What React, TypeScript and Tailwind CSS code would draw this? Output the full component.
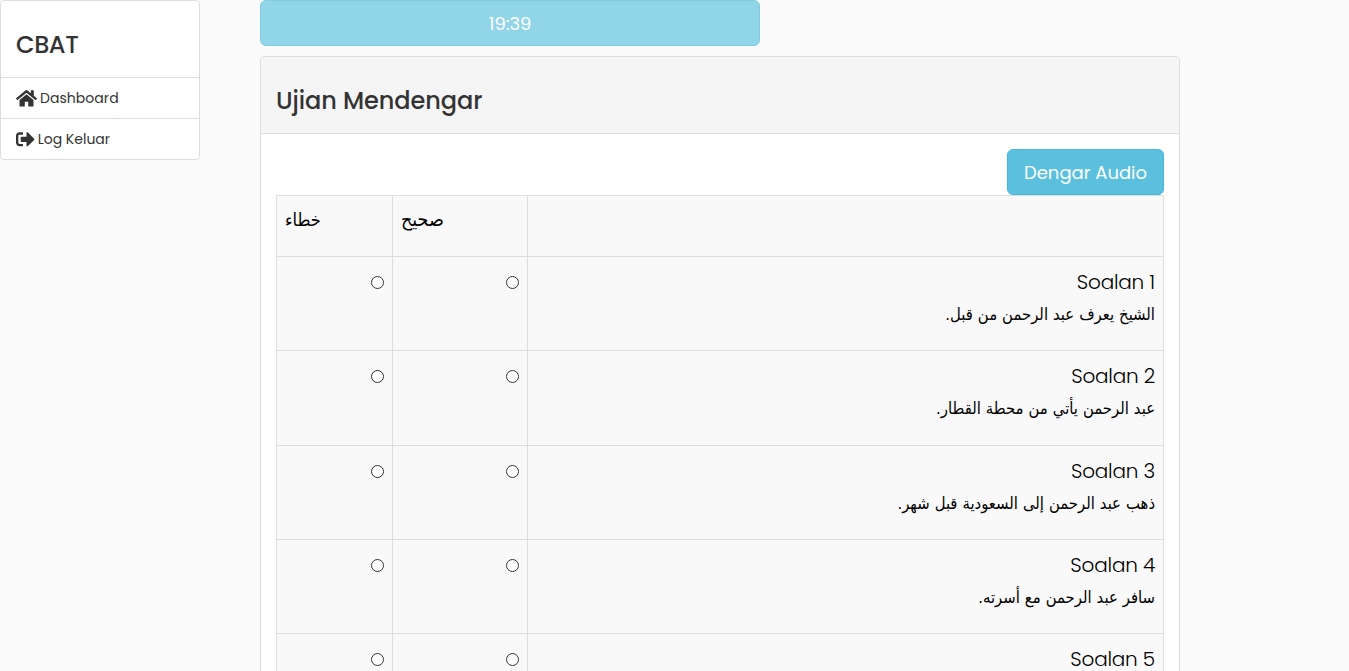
import { FaHome, FaSignOutAlt } from "react-icons/fa";

const questions = [
  { id: 1, text: "الشيخ يعرف عبد الرحمن من قبل." },
  { id: 2, text: "عبد الرحمن يأتي من محطة القطار." },
  { id: 3, text: "ذهب عبد الرحمن إلى السعودية قبل شهر." },
  { id: 4, text: "سافر عبد الرحمن مع أسرته." },
  { id: 5, text: "" },
];

function Choice({ name, label }: { name: string; label: string }) {
  return (
    <div className="flex justify-end border-l border-[#ddd] pt-[19px] pr-2">
      <input
        type="radio"
        name={name}
        aria-label={label}
        className="size-[13px] appearance-none rounded-full border border-[#333] bg-white checked:border-4"
      />
    </div>
  );
}

export default function App() {
  return (
    <div className="flex h-screen items-start overflow-hidden bg-[#fafafa] font-['Poppins','Inter',sans-serif] text-[#333]">
      <nav className="h-40 w-[200px] shrink-0 rounded border border-[#ddd] bg-white">
        <div className="h-[76px] px-[15px] pt-[29px]">
          <h3 className="text-2xl leading-[30px] font-medium tracking-[-0.4px]">CBAT</h3>
        </div>
        <a href="#" className="flex h-[41px] items-center gap-[3px] border-t border-[#ddd] px-[15px] text-sm tracking-[0.05px]">
          <FaHome className="h-[18.67px] w-[21px]" />
          Dashboard
        </a>
        <a href="#" className="flex h-[41px] items-center gap-[3px] border-t border-[#ddd] px-[15px] text-sm">
          <FaSignOutAlt className="size-[18.67px]" />
          Log Keluar
        </a>
      </nav>

      <main className="ml-[60px] w-[920px] shrink-0">
        <div className="flex h-[46px] w-[500px] items-center justify-center rounded-md border border-[#80cde2] bg-[#91d5e8] pt-0.5 text-lg tracking-[-0.1px] text-white">
          19:39
        </div>

        <section className="mt-[10px] rounded border border-[#ddd] bg-white">
          <header className="h-[77px] rounded-t-[3px] border-b border-[#ddd] bg-[#f5f5f5] px-[15px] pt-[29px]">
            <h3 className="text-2xl leading-[30px] font-medium tracking-[-0.06px]">Ujian Mendengar</h3>
          </header>
          <div className="px-[15px] pt-[15px]">
            <div className="flex justify-end">
              <button className="h-[46px] w-[157px] rounded-md border border-[#46b8da] bg-[#5bc0de] pt-0.5 text-lg text-white">
                Dengar Audio
              </button>
            </div>
            <div className="border-r border-[#ddd] bg-[#f9f9f9] text-black">
              <div className="grid h-[61px] grid-cols-[116px_135px_1fr] border-t border-[#ddd] font-['DejaVu_Sans_Condensed','DejaVu_Sans',sans-serif] leading-[30px]">
                <div className="border-l border-[#ddd] pt-[9px] pl-2 text-[18px]">
                  <span dir="rtl">خطاء</span>
                </div>
                <div className="border-l border-[#ddd] pt-[9px] pl-2 text-[19.5px]">
                  <span dir="rtl">صحيح</span>
                </div>
                <div className="border-l border-[#ddd]" />
              </div>
              {questions.map((q) => (
                <div key={q.id} className="grid h-[94.28px] grid-cols-[116px_135px_1fr] border-t border-[#ddd]">
                  <Choice name={`q${q.id}`} label="خطاء" />
                  <Choice name={`q${q.id}`} label="صحيح" />
                  <div className="border-l border-[#ddd] pt-[9px] pr-2 text-right">
                    <p className="text-xl leading-[32px] font-light tracking-[-0.2px]">Soalan {q.id}</p>
                    <p
                      dir="rtl"
                      className="pt-px font-['DejaVu_Sans_Condensed','DejaVu_Sans',sans-serif] text-[16.5px] leading-[31px] [word-spacing:0.3px]"
                    >
                      {q.text}
                    </p>
                  </div>
                </div>
              ))}
            </div>
          </div>
        </section>
      </main>
    </div>
  );
}
